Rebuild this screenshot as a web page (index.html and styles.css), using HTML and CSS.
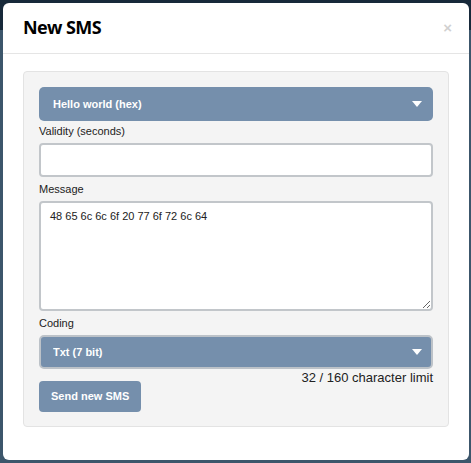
FILE: index.html
```html
<!DOCTYPE html>
<html lang="en">
<head>
  <meta charset="UTF-8" />
  <meta name="viewport" content="width=device-width, initial-scale=1.0" />
  <title>New SMS</title>
  <link rel="stylesheet" href="styles.css">
</head>
<body>
  <div class="modal">
    <!-- Header -->
    <header class="modal-header">
      <h4 class="modal-title">New SMS</h4>
      <span class="close">&times;</span>
    </header>

    <!-- Form -->
    <div class="modal-body">
      <form class="well">
        <div class="select-wrap">
          <select class="select select-preset">
            <option>Hello world (hex)</option>
          </select>
        </div>

        <label class="label label-first" for="validity">Validity (seconds)</label>
        <input type="text" id="validity" class="input" />

        <label class="label" for="message">Message</label>
        <textarea id="message" class="textarea">48 65 6c 6c 6f 20 77 6f 72 6c 64</textarea>

        <label class="label" for="coding">Coding</label>
        <div class="select-wrap">
          <select id="coding" class="select select-coding">
            <option>Txt (7 bit)</option>
          </select>
        </div>

        <div class="form-footer">
          <button type="button" class="btn-send">Send new SMS</button>
          <span class="counter">32 / 160 character limit</span>
        </div>
      </form>
    </div>
  </div>
</body>
</html>
```

FILE: styles.css
```css
:root {
  --slate: #758fac;
  --field-border: #c2c6ca;
  --text: #222;
}
* {
  margin: 0;
  padding: 0;
  box-sizing: border-box;
}
html, body {
  height: 100%;
}
body {
  background: linear-gradient(#17293a 0, #17293a 30px, #3c566b 30px);
  font-family: "Liberation Sans", Arial, sans-serif;
  color: var(--text);
  padding: 3px 2px 3px 3px;
  overflow: hidden;
}
/* Modal shell */
.modal {
  background: #fff;
  border-radius: 6px;
  height: 457px;
  display: flex;
  flex-direction: column;
}
.modal-header {
  display: flex;
  justify-content: space-between;
  align-items: center;
  padding: 15px 20px;
  border-bottom: 1px solid #e5e5e5;
}
.modal-title {
  font-family: "Open Sans", "Liberation Sans", sans-serif;
  font-size: 18px;
  font-weight: 700;
  line-height: 1.1;
  letter-spacing: -0.6px;
  color: #000;
}
.close {
  font-size: 15px;
  font-weight: 700;
  line-height: 1;
  color: #000;
  opacity: 0.18;
  margin-right: -3px;
}
.modal-body {
  padding: 17px 20px;
}
/* Well */
.well {
  background: #f4f4f4;
  border: 1px solid #e3e3e3;
  border-radius: 4px;
  padding: 15px 15px 14px;
}
.label {
  display: block;
  font-size: 11px;
  line-height: 15px;
  padding: 5px 0 4px;
  color: var(--text);
}
.label-first {
  padding-top: 3px;
}
/* Selects */
.select-wrap {
  position: relative;
}
.select-wrap::after {
  content: "";
  position: absolute;
  right: 11px;
  top: 50%;
  margin-top: -3px;
  border-left: 5px solid transparent;
  border-right: 5px solid transparent;
  border-top: 6px solid #fff;
  pointer-events: none;
}
.select {
  appearance: none;
  -webkit-appearance: none;
  display: block;
  width: 100%;
  height: 34px;
  background: var(--slate);
  color: #fff;
  font-family: inherit;
  font-size: 11px;
  font-weight: 700;
  padding: 0 30px 0 14px;
  border-radius: 5px;
  outline: none;
}
.select-preset {
  border: none;
}
.select-coding {
  border: 2px solid #bcc2c8;
  padding-left: 12px;
}
/* Text fields */
.input,
.textarea {
  display: block;
  width: 100%;
  background: #fff;
  border: 2px solid var(--field-border);
  border-radius: 4px;
  font-family: inherit;
  font-size: 11px;
  color: var(--text);
  outline: none;
}
.input {
  height: 34px;
  padding: 0 9px;
}
.textarea {
  height: 110px;
  line-height: 13px;
  padding: 7px 9px;
  resize: both;
}
/* Footer row */
.form-footer {
  display: flex;
  justify-content: space-between;
  align-items: flex-start;
}
.btn-send {
  margin-top: 12px;
  height: 31px;
  padding: 0 12px;
  background: var(--slate);
  color: #fff;
  border: none;
  border-radius: 4px;
  font-family: inherit;
  font-size: 11px;
  font-weight: 700;
}
.counter {
  font-size: 13px;
  line-height: 18px;
  color: var(--text);
}
```
